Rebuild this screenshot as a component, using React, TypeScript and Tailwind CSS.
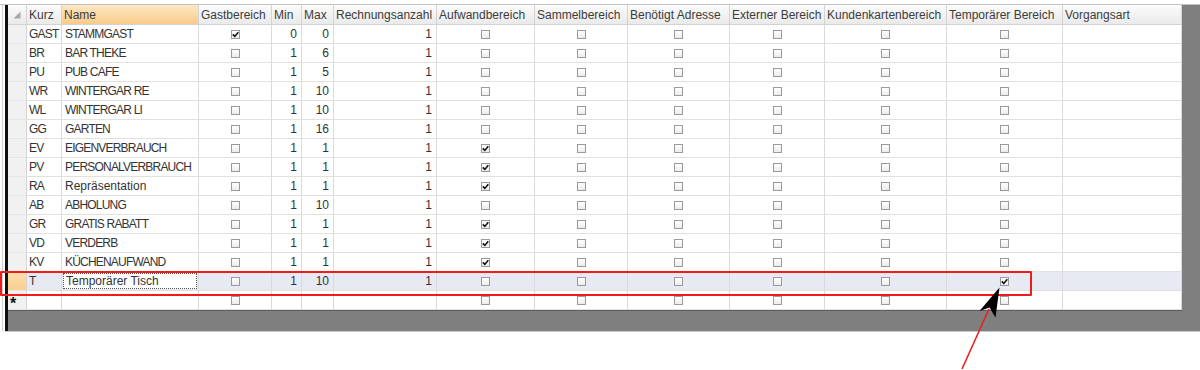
import React from "react";

type Row = {
  k: string;
  n: string;
  g: boolean;
  min: string;
  max: string;
  r: string;
  a: boolean;
  t: boolean;
};

const rows: Row[] = [
  { k: "GAST", n: "STAMMGAST", g: true, min: "0", max: "0", r: "1", a: false, t: false },
  { k: "BR", n: "BAR THEKE", g: false, min: "1", max: "6", r: "1", a: false, t: false },
  { k: "PU", n: "PUB CAFE", g: false, min: "1", max: "5", r: "1", a: false, t: false },
  { k: "WR", n: "WINTERGAR RE", g: false, min: "1", max: "10", r: "1", a: false, t: false },
  { k: "WL", n: "WINTERGAR LI", g: false, min: "1", max: "10", r: "1", a: false, t: false },
  { k: "GG", n: "GARTEN", g: false, min: "1", max: "16", r: "1", a: false, t: false },
  { k: "EV", n: "EIGENVERBRAUCH", g: false, min: "1", max: "1", r: "1", a: true, t: false },
  { k: "PV", n: "PERSONALVERBRAUCH", g: false, min: "1", max: "1", r: "1", a: true, t: false },
  { k: "RA", n: "Repräsentation", g: false, min: "1", max: "1", r: "1", a: true, t: false },
  { k: "AB", n: "ABHOLUNG", g: false, min: "1", max: "10", r: "1", a: false, t: false },
  { k: "GR", n: "GRATIS RABATT", g: false, min: "1", max: "1", r: "1", a: true, t: false },
  { k: "VD", n: "VERDERB", g: false, min: "1", max: "1", r: "1", a: true, t: false },
  { k: "KV", n: "KÜCHENAUFWAND", g: false, min: "1", max: "1", r: "1", a: true, t: false },
];

const headers = [
  "Kurz",
  "Name",
  "Gastbereich",
  "Min",
  "Max",
  "Rechnungsanzahl",
  "Aufwandbereich",
  "Sammelbereich",
  "Benötigt Adresse",
  "Externer Bereich",
  "Kundenkartenbereich",
  "Temporärer Bereich",
  "Vorgangsart",
];

function isCaps(v: string) {
  return v === v.toUpperCase() && /[A-Z]/.test(v);
}

function Check({ on }: { on: boolean }) {
  return (
    <div className="w-[9px] h-[9px] border border-[#9a9a9a] bg-linear-to-b from-[#ffffff] to-[#ececec] flex items-center justify-center">
      {on ? (
        <svg width="7" height="7" viewBox="0 0 7 7">
          <path d="M0.8 3.4 L2.8 5.4 L6.3 1.2" fill="none" stroke="#111" strokeWidth="1.6" />
        </svg>
      ) : null}
    </div>
  );
}

const cellBase =
  "h-[19px] border-r border-b border-r-[#dadada] border-b-[#e3e1da] flex items-center whitespace-nowrap overflow-hidden";

function TextCell({ v, sel, extra }: { v: string; sel: boolean; extra: string }) {
  return (
    <div className={`${cellBase} ${sel ? "bg-[#e7e9f3]" : "bg-white"} ${extra}`}>
      <span className={isCaps(v) ? "tracking-[-0.8px]" : ""}>{v}</span>
    </div>
  );
}

function NumCell({ v, sel }: { v: string; sel: boolean }) {
  return (
    <div className={`${cellBase} ${sel ? "bg-[#e7e9f3]" : "bg-white"} justify-end pr-[4px]`}>
      {v}
    </div>
  );
}

function BoxCell({ on, sel, show = true }: { on: boolean; sel: boolean; show?: boolean }) {
  return (
    <div className={`${cellBase} ${sel ? "bg-[#e7e9f3]" : "bg-white"} justify-center`}>
      {show ? <Check on={on} /> : null}
    </div>
  );
}

function DataRow({ row, sel, focusName }: { row: Row; sel: boolean; focusName?: boolean }) {
  return (
    <>
      <div
        className={`h-[19px] border-r border-b border-r-[#d4d4d4] border-b-[#e6e6e6] ${
          sel ? "bg-linear-to-b from-[#fddfae] to-[#fbcf8e]" : "bg-[#f1f1f1]"
        }`}
      />
      <TextCell v={row.k} sel={sel} extra="pl-[2px]" />
      {focusName ? (
        <div className={`${cellBase} bg-[#e7e9f3] p-[1px]`}>
          <div className="w-full h-full bg-white border border-dotted border-[#555] flex items-center pl-[2px]">
            {row.n}
          </div>
        </div>
      ) : (
        <TextCell v={row.n} sel={sel} extra="pl-[3px]" />
      )}
      <BoxCell on={row.g} sel={sel} />
      <NumCell v={row.min} sel={sel} />
      <NumCell v={row.max} sel={sel} />
      <NumCell v={row.r} sel={sel} />
      <BoxCell on={row.a} sel={sel} />
      <BoxCell on={false} sel={sel} />
      <BoxCell on={false} sel={sel} />
      <BoxCell on={false} sel={sel} />
      <BoxCell on={false} sel={sel} />
      <BoxCell on={row.t} sel={sel} />
      <div className={`${cellBase} ${sel ? "bg-[#e7e9f3]" : "bg-white"}`} />
    </>
  );
}

export default function App() {
  return (
    <div className="relative w-[1200px] h-[370px] bg-white overflow-hidden font-['Liberation_Sans',Arial,sans-serif] text-[12px] text-[#333333]">
      <div className="pt-[4px]">
        <div className="h-px bg-[#c4c4c4]" />
        <div className="flex h-[326px]">
          <div className="w-[2px]" />
          <div className="w-px bg-[#cfcfcf]" />
          <div className="w-[2px]" />
          <div className="w-[3px] bg-[#111]" />
          <div className="flex-1 bg-[#7f7f7f] flex items-start">
            <div className="w-[1174px] bg-white border-r border-b border-[#5e5e5e] grid grid-cols-[19px_35px_137px_73px_30px_32px_103px_98px_93px_102px_95px_122px_116px_119px]">
              {/* header */}
              <div className="h-[20px] border-r border-b border-[#d3d3d3] bg-linear-to-b from-[#fbfbfb] to-[#eaeaea] relative">
                <svg className="absolute left-[5px] top-[6px]" width="8" height="8" viewBox="0 0 8 8">
                  <polygon points="7.5,0.5 7.5,7.5 0.5,7.5" fill="#a9a9a9" />
                </svg>
              </div>
              {headers.map((h) => (
                <div
                  key={h}
                  className={`h-[20px] border-r border-b border-[#d3d3d3] flex items-center pl-[2px] whitespace-nowrap overflow-hidden text-[#3c3c3c] ${
                    h === "Name"
                      ? "bg-linear-to-b from-[#fde8c4] to-[#f8cb88]"
                      : "bg-linear-to-b from-[#fbfbfb] to-[#eaeaea]"
                  }`}
                >
                  {h}
                </div>
              ))}
              {rows.map((r) => (
                <DataRow key={r.k} row={r} sel={false} />
              ))}
              <DataRow
                row={{ k: "T", n: "Temporärer Tisch", g: false, min: "1", max: "10", r: "1", a: false, t: true }}
                sel={true}
                focusName
              />
              {/* new row */}
              <div className="h-[19px] border-r border-b border-r-[#d4d4d4] border-b-[#e6e6e6] bg-[#f1f1f1] flex items-center pl-[2px]">
                <span className="font-bold text-[16px] text-[#111] leading-none translate-y-[4px]">*</span>
              </div>
              <div className={`${cellBase} bg-white`} />
              <div className={`${cellBase} bg-white`} />
              <BoxCell on={false} sel={false} />
              <div className={`${cellBase} bg-white`} />
              <div className={`${cellBase} bg-white`} />
              <div className={`${cellBase} bg-white`} />
              <BoxCell on={false} sel={false} />
              <BoxCell on={false} sel={false} />
              <BoxCell on={false} sel={false} />
              <BoxCell on={false} sel={false} />
              <BoxCell on={false} sel={false} />
              <BoxCell on={false} sel={false} />
              <div className={`${cellBase} bg-white`} />
            </div>
          </div>
        </div>
        <div className="h-px bg-[#c8c8c8] ml-[5px]" />
      </div>

      {/* annotation: red rectangle */}
      <div className="absolute left-0 top-[271px] w-[1032px] h-[25px] border-2 border-[#f01c1c] rounded-[1px] pointer-events-none" />

      {/* annotation: arrow */}
      <svg className="absolute left-0 top-0 pointer-events-none" width="1200" height="370" viewBox="0 0 1200 370">
        <line x1="962" y1="369" x2="989" y2="309" stroke="#e82020" strokeWidth="1.6" />
        <polygon points="999.5,287.5 995.5,317.5 989.5,307.5 979.5,311" fill="#000" />
      </svg>
    </div>
  );
}
